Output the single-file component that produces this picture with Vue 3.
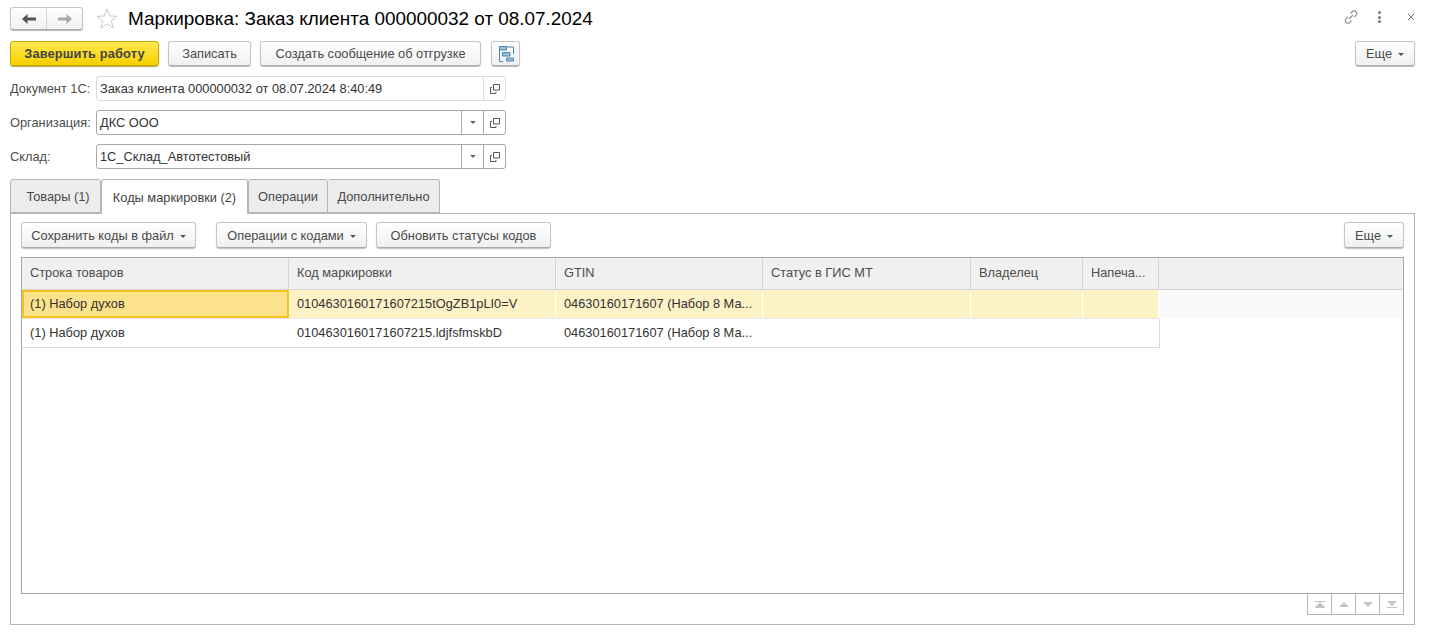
<script setup>
const columns = [
  { title: 'Строка товаров', width: 267 },
  { title: 'Код маркировки', width: 267 },
  { title: 'GTIN', width: 207 },
  { title: 'Статус в ГИС МТ', width: 208 },
  { title: 'Владелец', width: 112 },
  { title: 'Напеча...', width: 76 }
]
const rows = [
  ['(1) Набор духов', '010463016017160' + '7215tOgZB1pLI0=V', '04630160171607 (Набор 8 Ма...', '', '', ''],
  ['(1) Набор духов', '010463016017160' + '7215.ldjfsfmskbD', '04630160171607 (Набор 8 Ма...', '', '', '']
]
const fields = [
  { label: 'Документ 1С:', value: 'Заказ клиента 000000032 от 08.07.2024 8:40:49', drop: false },
  { label: 'Организация:', value: 'ДКС ООО', drop: true },
  { label: 'Склад:', value: '1С_Склад_Автотестовый', drop: true }
]
const tabs = ['Товары (1)', 'Коды маркировки (2)', 'Операции', 'Дополнительно']
</script>

<template>
  <div class="page">
    <header class="head">
      <div class="nav">
        <span class="nav-cell">
          <svg width="14" height="10" viewBox="0 0 14 10"><path d="M0 5l5.500-5v3.500H14v3H5.500V10z" fill="#555" /></svg>
        </span>
        <span class="nav-cell">
          <svg width="14" height="10" viewBox="0 0 14 10"><path d="M14 5L8.500 0v3.500H0v3h8.500V10z" fill="#aaa" /></svg>
        </span>
      </div>
      <svg class="star" width="22" height="22" viewBox="0 0 22 22">
        <path d="M11 1l2.700 7 7.300.3-5.700 4.600 2 7.100L11 16l-6.300 4 2-7.100L1 8.300 8.300 8z" fill="#fff" stroke="#c8c8c8" />
      </svg>
      <h1 class="title">Маркировка: Заказ клиента 000000032 от 08.07.2024</h1>
      <div class="win">
        <svg width="16" height="16" viewBox="0 0 16 16" fill="none" stroke="#8a8a8a" stroke-width="1.100">
          <path d="M6 10l4-4M7.500 4.500l1.800-1.800a2.500 2.500 0 0 1 3.700 0 2.500 2.500 0 0 1 0 3.700l-1.800 1.800M8.500 11.500l-1.800 1.800a2.500 2.500 0 0 1-3.700 0 2.500 2.500 0 0 1 0-3.700l1.800-1.800" />
        </svg>
        <span class="dots"><i></i><i></i><i></i></span>
        <svg width="8" height="8" viewBox="0 0 8 8" stroke="#777" stroke-width="1"><path d="M1 1l6 6M7 1L1 7" /></svg>
      </div>
    </header>

    <div class="toolbar">
      <button class="btn primary">Завершить работу</button>
      <button class="btn w83">Записать</button>
      <button class="btn w221">Создать сообщение об отгрузке</button>
      <button class="btn icon">
        <svg width="18" height="18" viewBox="0 0 18 18" fill="none" stroke="#4d86ad">
          <path d="M2.500 1.500h7v3.500h-7zM5.500 7.500h7.500v3.500H5.500zM9.500 13h7v3h-7z" fill="#9cc0da" />
          <path d="M2.500 5v11.500h3.500M10 2h6.500v7" />
        </svg>
      </button>
      <button class="btn more push">Еще<span class="caret"></span></button>
    </div>

    <div class="fields">
      <div v-for="(f, i) in fields" :key="f.label" class="field">
        <label class="label">{{ f.label }}</label>
        <div class="input" :class="{ light: i === 0 }">
          <span class="value">{{ f.value }}</span>
          <span v-if="f.drop" class="addon"><span class="caret dark"></span></span>
          <span class="addon">
            <svg width="10" height="10" viewBox="0 0 10 10" fill="none" stroke="#555"><path d="M3.500.5h6v5.500h-6zM2 3.500H.5v6h5.500V8" /></svg>
          </span>
        </div>
      </div>
    </div>

    <nav class="tabs">
      <span v-for="(t, i) in tabs" :key="t" class="tab" :class="['t' + i, { active: i === 1 }]">{{ t }}</span>
    </nav>

    <section class="panel">
      <div class="panel-bar">
        <button class="btn w175">Сохранить коды в файл<span class="caret"></span></button>
        <button class="btn w151 gap">Операции с кодами<span class="caret"></span></button>
        <button class="btn w175">Обновить статусы кодов</button>
        <button class="btn more push">Еще<span class="caret"></span></button>
      </div>

      <div class="table">
        <div class="thead">
          <div v-for="c in columns" :key="c.title" class="th" :style="{ width: c.width + 'px' }">{{ c.title }}</div>
          <div class="th rest"></div>
        </div>
        <div class="tr selected">
          <div class="cells">
            <div v-for="(cell, j) in rows[0]" :key="j" class="td" :class="{ focus: j === 0 }" :style="{ width: columns[j].width + 'px' }">{{ cell }}</div>
          </div>
          <div class="tail"></div>
        </div>
        <div class="tr second">
          <div class="cells">
            <div v-for="(cell, j) in rows[1]" :key="j" class="td" :style="{ width: columns[j].width + 'px' }">{{ cell }}</div>
          </div>
        </div>
      </div>

      <div class="pager">
        <span class="pg"><svg width="10" height="7" viewBox="0 0 10 7" fill="#c4c4c4"><path d="M0 0h10v1H0zM5 1l5 5H0zM0 6h10v1H0z" /></svg></span>
        <span class="pg"><svg width="10" height="7" viewBox="0 0 10 7" fill="#c4c4c4"><path d="M5 1l5 5H0z" /></svg></span>
        <span class="pg"><svg width="10" height="7" viewBox="0 0 10 7" fill="#c4c4c4"><path d="M0 1h10L5 6z" /></svg></span>
        <span class="pg"><svg width="10" height="7" viewBox="0 0 10 7" fill="#c4c4c4"><path d="M0 0h10L5 5zM0 6h10v1H0z" /></svg></span>
      </div>
    </section>
  </div>
</template>

<style>
html, body { margin: 0; background: #fff; }
</style>

<style scoped>
.page {
  width: 1429px;
  height: 634px;
  box-sizing: border-box;
  padding: 6px 14px 0 10px;
  font-family: "Liberation Sans", Arial, sans-serif;
  font-size: 12.8px;
  color: #333;
  background: #fff;
  overflow: hidden;
}
.head { display: flex; align-items: center; height: 25px; }
.nav {
  display: flex;
  width: 73px;
  height: 23px;
  box-sizing: border-box;
  border: 1px solid #c5c5c5;
  border-bottom-color: #a8a8a8;
  border-radius: 3px;
  background: linear-gradient(#fff, #f1f1f1);
  box-shadow: 0 1px 1px #bbb;
}
.nav-cell { flex: 1; display: flex; align-items: center; justify-content: center; }
.nav-cell + .nav-cell { border-left: 1px solid #d6d6d6; }
.star { margin-left: 13px; margin-top: 1px; }
.title { margin: 0 0 0 10px; font-size: 18.9px; font-weight: 400; color: #000; line-height: 25px; white-space: nowrap; }
.win { margin-left: auto; display: flex; align-items: center; padding-right: 0; margin-top: -3px; }
.win svg:first-child { margin-right: 19px; }
.dots { display: flex; flex-direction: column; gap: 1.500px; margin-right: 26px; }
.dots i { display: block; width: 3px; height: 3px; border-radius: 50%; background: #777; }

.toolbar { display: flex; margin-top: 10px; height: 25px; }
.toolbar .btn + .btn { margin-left: 9px; }
.btn {
  box-sizing: border-box;
  height: 25px;
  padding: 0;
  border: 1px solid #c5c5c5;
  border-bottom-color: #a9a9a9;
  border-radius: 3px;
  background: linear-gradient(#fff, #f0f0f0);
  box-shadow: 0 1px 1px #bdbdbd;
  font: inherit;
  color: #4a4a4a;
  white-space: nowrap;
  display: flex;
  align-items: center;
  justify-content: center;
}
.primary {
  width: 149px;
  border-color: #c9a800;
  background: linear-gradient(#ffe94f, #f7cf00);
  color: #444;
  font-weight: 700;
  letter-spacing: .15px;
  box-shadow: 0 1px 1px #b9a84a;
}
.w83 { width: 83px; }
.w221 { width: 221px; }
.w175 { width: 175px; }
.w151 { width: 151px; }
.toolbar .btn.icon { width: 29px; margin-left: 10px; }
.more { width: 60px; }
.toolbar .btn.push, .panel-bar .btn.push { margin-left: auto; }
.caret {
  display: inline-block;
  width: 0;
  height: 0;
  margin-left: 6px;
  margin-top: 2px;
  border-left: 3px solid transparent;
  border-right: 3px solid transparent;
  border-top: 3px solid #555;
}
.caret.dark { margin: 0; border-top-color: #666; }

.fields { margin-top: 10px; display: flex; flex-direction: column; gap: 9px; }
.field { display: flex; align-items: center; height: 25px; }
.label { width: 86px; color: #4d4d4d; white-space: nowrap; }
.input {
  width: 410px;
  height: 25px;
  box-sizing: border-box;
  display: flex;
  border: 1px solid #a9a9a9;
  border-radius: 3px;
  background: #fff;
}
.input.light { border-color: #dcdcdc; }
.value { flex: 1; padding-left: 3px; line-height: 23px; color: #333; }
.addon { width: 21px; display: flex; align-items: center; justify-content: center; border-left: 1px solid #a9a9a9; }
.input.light .addon { border-left-color: #dcdcdc; }

.tabs { display: flex; margin-top: 10px; height: 34px; position: relative; z-index: 1; }
.tab {
  box-sizing: border-box;
  height: 34px;
  display: flex;
  align-items: center;
  justify-content: center;
  background: #ececec;
  border: 1px solid #b5b5b5;
  border-radius: 3px 3px 0 0;
  color: #4a4a4a;
}
.tab.active { height: 35px; background: #fff; border-bottom: 0; color: #444; }
.t0 { width: 91px; padding-left: 5px; }
.t1 { width: 147px; }
.t2 { width: 80px; }
.t3 { width: 112px; border-left: 0; }

.panel {
  height: 412px;
  box-sizing: border-box;
  border: 1px solid #b5b5b5;
  padding: 8px 10px 0 10px;
}
.panel-bar { display: flex; height: 26px; }
.panel-bar .btn { height: 26px; }
.panel-bar .gap { margin: 0 9px 0 20px; }

.table {
  margin-top: 9px;
  height: 337px;
  box-sizing: border-box;
  border: 1px solid #a6a6a6;
}
.thead { display: flex; height: 31px; background: #f0f0f0; border-bottom: 1px solid #d4d4d4; }
.th {
  box-sizing: border-box;
  padding: 0 8px;
  line-height: 29px;
  border-right: 1px solid #d4d4d4;
  color: #4d4d4d;
  white-space: nowrap;
}
.th.rest { flex: 1; border-right: 0; }
.tr { display: flex; }
.cells { display: flex; border-right: 1px solid #d8d8d8; border-bottom: 1px solid #dcdcdc; }
.td {
  box-sizing: border-box;
  height: 28px;
  padding: 0 8px;
  line-height: 28px;
  color: #333;
  white-space: nowrap;
  overflow: hidden;
  border-right: 1px solid transparent;
}
.selected .td { background: #fdf1c6; border-right-color: #fff; }
.selected .td.focus { background: #fde28c; outline: 2px solid #f5c31d; outline-offset: -2px; }
.selected .cells { border-bottom-color: #e8e8e8; border-right-color: #fff; }
.selected .tail { flex: 1; height: 28px; background: #f9f9f9; }

.pager { display: flex; justify-content: flex-end; }
.pg {
  box-sizing: border-box;
  width: 24px;
  height: 21px;
  display: flex;
  align-items: center;
  justify-content: center;
  border: 1px solid #b5b5b5;
  border-top: 0;
  border-left: 0;
}
.pg:first-child { border-left: 1px solid #b5b5b5; width: 25px; }
</style>
